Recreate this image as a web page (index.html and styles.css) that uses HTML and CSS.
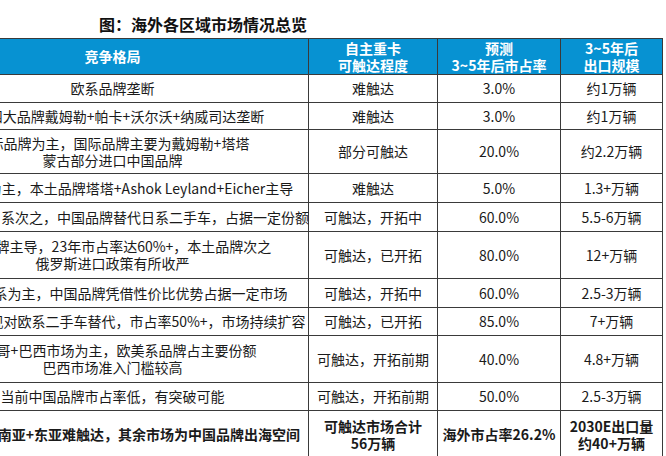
FILE: index.html
```html
<!DOCTYPE html>
<html lang="zh-CN">
<head>
<meta charset="utf-8">
<link rel="stylesheet" href="styles.css">
</head>
<body>
<div class="viewport">
  <div class="figure">
    <div class="title">图：海外各区域市场情况总览</div>
    <table class="grid">
      <colgroup>
        <col class="c0"><col class="c1"><col class="c2"><col class="c3"><col class="c4">
      </colgroup>
      <thead>
        <tr class="h">
          <th>区域</th>
          <th>竞争格局</th>
          <th>自主重卡<br>可触达程度</th>
          <th>预测<br>3~5年后市占率</th>
          <th class="lt">3~5年后<br>出口规模</th>
        </tr>
      </thead>
      <tbody>
        <tr class="r1"><td>西欧</td><td>欧系品牌垄断</td><td>难触达</td><td>3.0%</td><td class="lt">约1万辆</td></tr>
        <tr class="r2"><td>北美</td><td>北美四大品牌戴姆勒+帕卡+沃尔沃+纳威司达垄断</td><td>难触达</td><td>3.0%</td><td class="lt">约1万辆</td></tr>
        <tr class="r3"><td>蒙古</td><td>国际品牌为主，国际品牌主要为戴姆勒+塔塔<br>蒙古部分进口中国品牌</td><td>部分可触达</td><td>20.0%</td><td class="lt">约2.2万辆</td></tr>
        <tr class="r4"><td>印度</td><td>国内品牌为主，本土品牌塔塔+Ashok Leyland+Eicher主导</td><td>难触达</td><td>5.0%</td><td class="lt">1.3+万辆</td></tr>
        <tr class="r5"><td>东南亚</td><td>欧系为主，日系次之，中国品牌替代日系二手车，占据一定份额</td><td>可触达，开拓中</td><td>60.0%</td><td class="lt">5.5-6万辆</td></tr>
        <tr class="r6"><td>俄罗斯</td><td>中国品牌主导，23年市占率达60%+，本土品牌次之<br>俄罗斯进口政策有所收严</td><td>可触达，已开拓</td><td>80.0%</td><td class="lt">12+万辆</td></tr>
        <tr class="r7"><td>中东</td><td>以欧美日系为主，中国品牌凭借性价比优势占据一定市场</td><td>可触达，开拓中</td><td>60.0%</td><td class="lt">2.5-3万辆</td></tr>
        <tr class="r8"><td>非洲</td><td>中国品牌实现对欧系二手车替代，市占率50%+，市场持续扩容</td><td>可触达，已开拓</td><td>85.0%</td><td class="lt">7+万辆</td></tr>
        <tr class="r9"><td>拉美</td><td>墨西哥+巴西市场为主，欧美系品牌占主要份额<br>巴西市场准入门槛较高</td><td>可触达，开拓前期</td><td>40.0%</td><td class="lt">4.8+万辆</td></tr>
        <tr class="r10"><td>澳洲</td><td>当前中国品牌市占率低，有突破可能</td><td>可触达，开拓前期</td><td>50.0%</td><td class="lt">2.5-3万辆</td></tr>
        <tr class="r11 total"><td>合计</td><td>北美+欧洲+南亚+东亚难触达，其余市场为中国品牌出海空间</td><td>可触达市场合计<br>56万辆</td><td>海外市占率26.2%</td><td class="lt">2030E出口量<br>约40+万辆</td></tr>
      </tbody>
    </table>
  </div>
</div>
</body>
</html>
```
FILE: styles.css
```css
html, body {
  margin: 0;
  padding: 0;
  background: #ffffff;
}
.viewport {
  width: 666px;
  height: 456px;
  overflow: hidden;
  font-family: "Noto Sans CJK SC", "Noto Sans", sans-serif;
  color: #1a1a1a;
}
.figure {
  width: 918px;
  margin-left: -256px;
}
.title {
  box-sizing: border-box;
  height: 38px;
  padding-top: 14px;
  font-size: 16px;
  line-height: 20px;
  font-weight: 700;
  text-align: center;
  color: #111;
}
.grid {
  border-collapse: collapse;
  table-layout: fixed;
  width: 918px;
  font-size: 14px;
}
.c0 { width: 172px; }
.c1 { width: 392px; }
.c2 { width: 129px; }
.c3 { width: 123px; }
.c4 { width: 102px; }
.grid th, .grid td {
  border: 1px solid #3a3a3a;
  padding: 0;
  text-align: center;
  vertical-align: middle;
  white-space: nowrap;
  overflow: visible;
  line-height: 17px;
}
.grid th {
  background: #0792d2;
  color: #ffffff;
  font-weight: 700;
  line-height: 17px;
}
.grid td.lt, .grid th.lt {
  border-left-color: #8a8a8a;
}
.h { height: 36px; }
.r1 { height: 28px; }
.r2 { height: 27px; }
.r3 { height: 44px; }
.r4 { height: 29px; }
.r5 { height: 29px; }
.r6 { height: 47px; }
.r7 { height: 29px; }
.r8 { height: 28px; }
.r9 { height: 47px; }
.r10 { height: 28px; }
.r11 { height: 48px; }
.total td {
  font-weight: 700;
}
```
